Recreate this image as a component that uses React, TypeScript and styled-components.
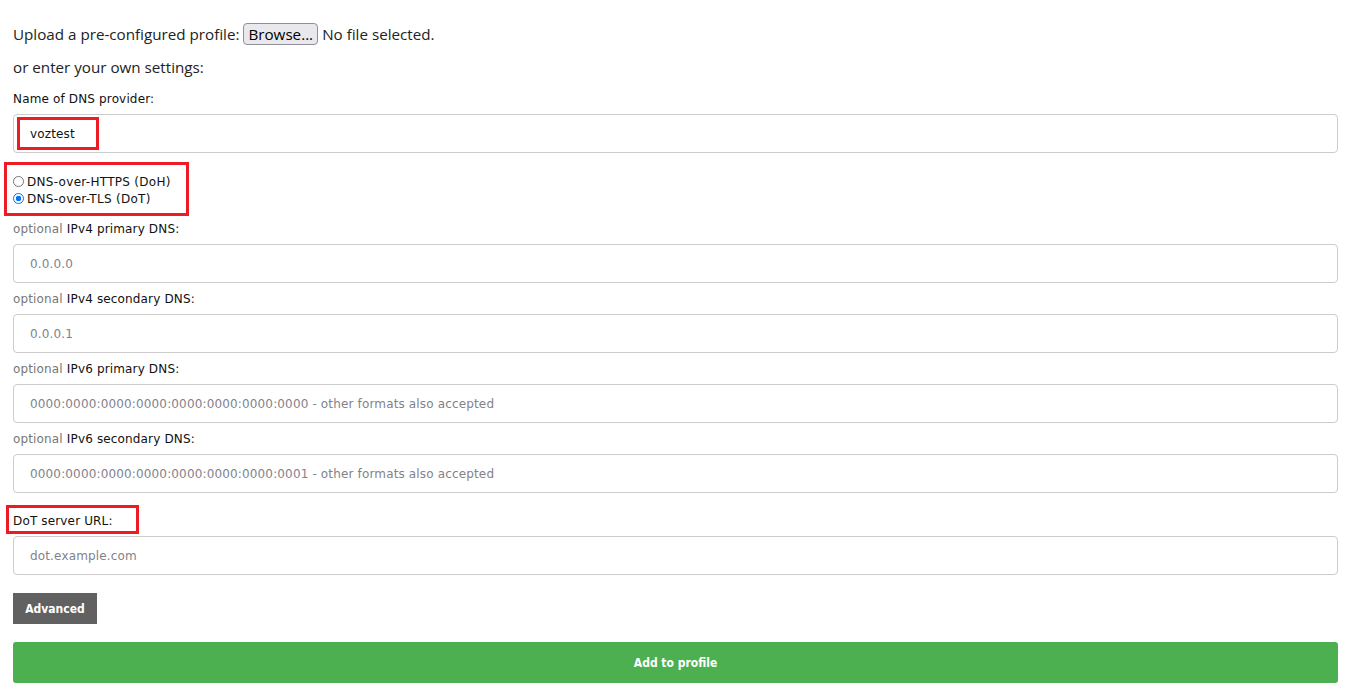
import { createGlobalStyle, styled } from 'styled-components';

const GlobalStyle = createGlobalStyle`
  html, body {
    margin: 0;
    padding: 0;
    background: #fff;
  }
  body {
    font-family: "DejaVu Sans", Verdana, sans-serif;
    color: #000;
  }
`;

const fields = [
  { label: 'IPv4 primary DNS:', placeholder: '0.0.0.0' },
  { label: 'IPv4 secondary DNS:', placeholder: '0.0.0.1' },
  {
    label: 'IPv6 primary DNS:',
    placeholder: '0000:0000:0000:0000:0000:0000:0000:0000 - other formats also accepted',
  },
  {
    label: 'IPv6 secondary DNS:',
    placeholder: '0000:0000:0000:0000:0000:0000:0000:0001 - other formats also accepted',
  },
];

export default function App() {
  return (
    <>
      <GlobalStyle />
      <Form onSubmit={(e) => e.preventDefault()}>
        <UploadRow>
          Upload a pre-configured profile:
          <BrowseButton type="button">Browse...</BrowseButton>
          No file selected.
        </UploadRow>
        <IntroLine>or enter your own settings:</IntroLine>

        <Label>Name of DNS provider:</Label>
        <Marked>
          <TextInput defaultValue="voztest" />
          <Mark $top={3} $left={4} $width={82} $height={33} />
        </Marked>

        <RadioGroup>
          <RadioRow>
            <Radio type="radio" name="proto" />
            DNS-over-HTTPS (DoH)
          </RadioRow>
          <RadioRow>
            <Radio type="radio" name="proto" defaultChecked />
            DNS-over-TLS (DoT)
          </RadioRow>
          <Mark $top={-11} $left={-9} $width={185} $height={54} />
        </RadioGroup>

        {fields.map((f) => (
          <Field key={f.label}>
            <Label>
              <Optional>optional</Optional> {f.label}
            </Label>
            <TextInput placeholder={f.placeholder} />
          </Field>
        ))}

        <ServerField>
          <Marked>
            <Label>DoT server URL:</Label>
            <Mark $top={-9} $left={-7} $width={133} $height={29} />
          </Marked>
          <TextInput placeholder="dot.example.com" />
        </ServerField>

        <AdvancedButton type="button">Advanced</AdvancedButton>
        <SubmitButton type="submit">Add to profile</SubmitButton>
      </Form>
    </>
  );
}

const Form = styled.form`
  display: flex;
  flex-direction: column;
  padding: 23px 8px 10px 13px;
`;

const UploadRow = styled.div`
  display: flex;
  align-items: center;
  height: 22px;
  font-family: "Open Sans", "Noto Sans", sans-serif;
  font-size: 15.2px;
  color: #222;
  white-space: pre;
`;

const BrowseButton = styled.button`
  height: 22px;
  margin: 0 4px;
  padding: 0 4px;
  border: 1px solid #8f8f9d;
  border-radius: 4px;
  background: #e9e9ed;
  font-family: "Open Sans", "Noto Sans", sans-serif;
  font-size: 15.2px;
  color: #000;
  line-height: 20px;
`;

const IntroLine = styled.div`
  height: 22px;
  margin: 11px 0 14px;
  font-family: "Open Sans", "Noto Sans", sans-serif;
  font-size: 15.2px;
  line-height: 22px;
  color: #222;
`;

const Label = styled.div`
  height: 15px;
  font-size: 12px;
  line-height: 15px;
  letter-spacing: 0.15px;
  color: #111;
  margin-bottom: 7px;
`;

const Optional = styled.span`
  color: #777;
`;

const Marked = styled.div`
  position: relative;
`;

// red annotation frame laid over a control
const Mark = styled.div<{ $top: number; $left: number; $width: number; $height: number }>`
  position: absolute;
  top: ${(p) => p.$top}px;
  left: ${(p) => p.$left}px;
  width: ${(p) => p.$width}px;
  height: ${(p) => p.$height}px;
  box-sizing: border-box;
  border: 3px solid #ed1c24;
  pointer-events: none;
`;

const TextInput = styled.input`
  box-sizing: border-box;
  width: 100%;
  height: 39px;
  padding: 0 16px;
  border: 1px solid #ccc;
  border-radius: 4px;
  font-family: "DejaVu Sans", Verdana, sans-serif;
  font-size: 12px;
  letter-spacing: 0.15px;
  color: #111;
  outline: none;

  &::placeholder {
    color: #82828c;
    opacity: 1;
  }
`;

const RadioGroup = styled.div`
  position: relative;
  display: flex;
  flex-direction: column;
  margin: 20px 0 15px;
`;

const RadioRow = styled.label`
  display: flex;
  align-items: center;
  height: 17px;
  font-size: 12px;
  letter-spacing: 0.3px;
  color: #111;
`;

const Radio = styled.input`
  appearance: none;
  box-sizing: border-box;
  width: 11px;
  height: 11px;
  margin: 0 3px 0 0;
  border: 1px solid #767676;
  border-radius: 50%;
  background: #fff;

  &:checked {
    border: 1px solid #0075ff;
    background: radial-gradient(circle, #0075ff 0 2.6px, #fff 3px);
  }
`;

const Field = styled.div`
  display: flex;
  flex-direction: column;
  margin-bottom: 9px;
`;

const ServerField = styled.div`
  display: flex;
  flex-direction: column;
  margin-top: 12px;
`;

const AdvancedButton = styled.button`
  align-self: flex-start;
  width: 84px;
  height: 31px;
  margin-top: 18px;
  border: none;
  background: #616161;
  color: #fff;
  font-family: "DejaVu Sans Condensed", "DejaVu Sans", sans-serif;
  font-size: 12px;
  font-weight: bold;
`;

const SubmitButton = styled.button`
  width: 100%;
  height: 41px;
  margin-top: 18px;
  border: none;
  border-radius: 3px;
  background: #4caf50;
  color: #fff;
  font-family: "DejaVu Sans Condensed", "DejaVu Sans", sans-serif;
  font-size: 12px;
  font-weight: bold;
`;
